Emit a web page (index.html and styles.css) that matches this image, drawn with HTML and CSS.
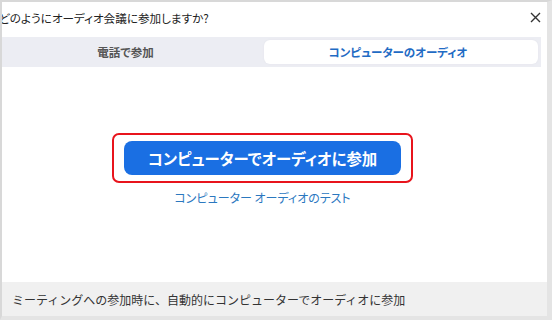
FILE: index.html
```html
<!DOCTYPE html>
<html>
	<head>
		<meta charset="UTF-8">
		<title>オーディオに参加</title>
		<link rel="stylesheet" href="styles.css">
	</head>
	<body>
		<div class="dialog">
			<div class="header">
				<span class="title">どのようにオーディオ会議に参加しますか?</span>
				<svg class="close" width="11" height="11" viewBox="0 0 11 11">
					<path d="M1 1L10 10M10 1L1 10" stroke="#333" stroke-width="1.4"/>
				</svg>
			</div>
			<div class="tabs">
				<div class="tab">電話で参加</div>
				<div class="tab active">コンピューターのオーディオ</div>
			</div>
			<div class="main">
				<div class="highlight">
					<button class="join">コンピューターでオーディオに参加</button>
				</div>
				<a class="test">コンピューター オーディオのテスト</a>
			</div>
			<div class="footer">ミーティングへの参加時に、自動的にコンピューターでオーディオに参加</div>
		</div>
	</body>
</html>
```

FILE: styles.css
```css
/* 内外边距清零 */
* {
	margin: 0;
	padding: 0;
	box-sizing: border-box;
}
body {
	font-family: "Noto Sans CJK JP", "Noto Sans", sans-serif;
	font-feature-settings: "palt";
	background: #fff;
}
.dialog {
	width: 552px;
	height: 320px;
	border-top: 2px solid #d8d8d8;
	border-left: 2px solid #d8d8d8;
	border-right: 5px solid #e4e4e4;
	border-bottom: 4px solid #e4e4e4;
	display: flex;
	flex-direction: column;
	overflow: hidden;
}
.header {
	height: 35px;
	display: flex;
	align-items: center;
	justify-content: space-between;
	padding-right: 6px;
	padding-bottom: 4px;
}
.title {
	font-size: 11.6px;
	color: #222;
	margin-left: -3px;
}
.tabs {
	height: 30px;
	margin-right: 6px;
	background: #ecedf3;
	display: flex;
	padding: 3px;
}
.tab {
	flex: 1;
	display: flex;
	align-items: center;
	justify-content: center;
	font-size: 11.5px;
	font-weight: bold;
	color: #555;
	border-radius: 6px;
	padding-right: 18px;
}
.tab.active {
	flex: 0 0 274px;
	background: #fff;
	color: #1f6bc4;
	padding-right: 6px;
	box-shadow: 0 0 2px #e2e3ea;
}
.main {
	flex: 1;
	display: flex;
	flex-direction: column;
	align-items: center;
	padding-top: 66px;
	padding-right: 24px;
}
.highlight {
	border: 2px solid #e8141c;
	border-radius: 7px;
	padding: 6px 10px;
}
.join {
	width: 277px;
	height: 34px;
	border: none;
	border-radius: 8px;
	background: #1a6fe3;
	color: #fff;
	font-family: inherit;
	font-feature-settings: "palt";
	font-size: 15.4px;
	font-weight: bold;
}
.test {
	margin-top: 6px;
	font-size: 12px;
	color: #2b78bf;
}
.footer {
	height: 34px;
	background: #f0f0f0;
	display: flex;
	align-items: center;
	padding-left: 10px;
	font-size: 12px;
	font-feature-settings: normal;
	color: #333;
}
```
